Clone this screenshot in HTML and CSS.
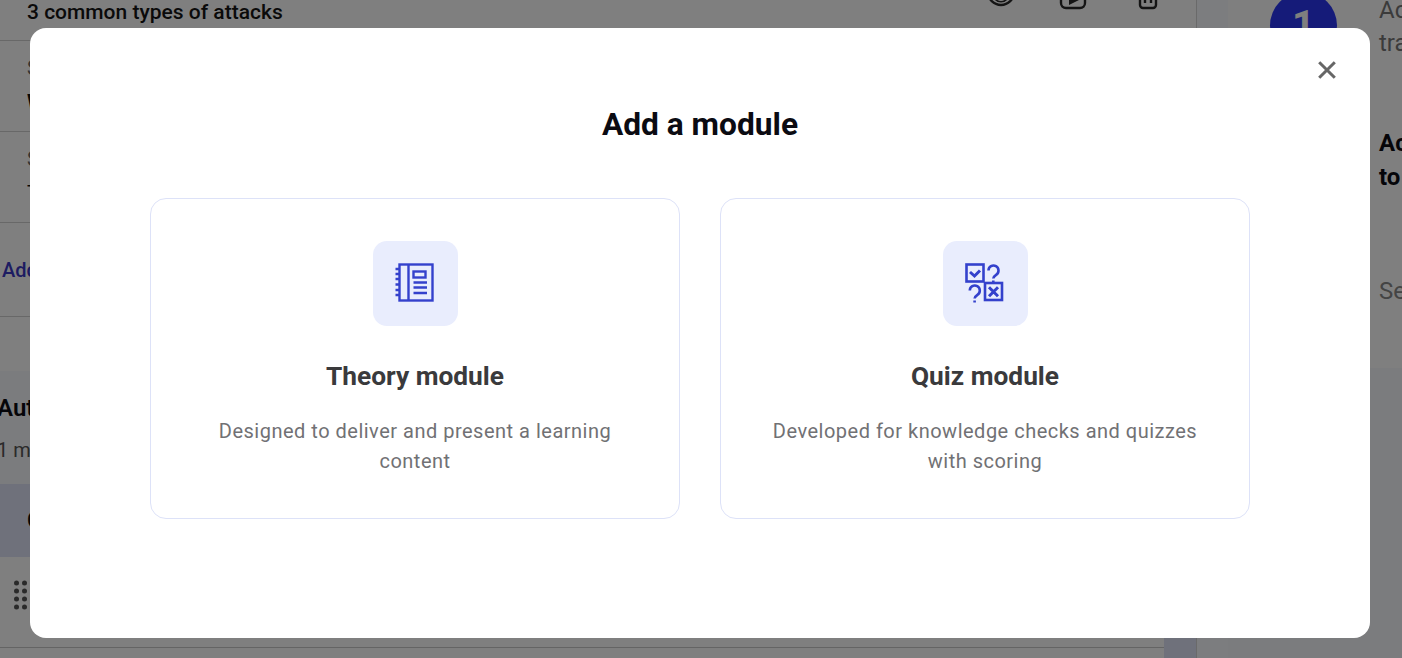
FILE: index.html
```html
<!DOCTYPE html>
<html lang="en">
<head>
<meta charset="utf-8">
<title>Add a module</title>
<link rel="stylesheet" href="styles.css">
</head>
<body>
<div class="page">
  <main class="main">
    <div class="content">
      <div class="row row-head">
        <span class="head-title">3 common types of attacks</span>
        <span class="head-icons">
          <svg class="ico" viewBox="0 0 28 28"><circle cx="14" cy="-8" r="13"/><path class="thin" d="M8 -1 a8 8 0 0 0 12 0"/></svg>
          <svg class="ico" viewBox="0 0 28 28"><rect x="2" y="-16" width="24" height="24" rx="5"/><path class="solid" d="M10 -2 L20 0 L10 5z"/></svg>
          <svg class="ico" viewBox="0 0 28 28"><path d="M6 -6 V5 a3 3 0 0 0 3 3 H19 a3 3 0 0 0 3 -3 V-6 M11 -2 V3 M17 -2 V3"/></svg>
        </span>
      </div>
      <div class="row row-step"><span class="step-label">S</span><b class="step-name">W</b></div>
      <div class="row row-step"><span class="step-label">S</span><span class="step-name">T</span></div>
      <div class="row row-add"><span class="add-link">Add</span></div>
      <div class="spacer"></div>
      <section class="auto">
        <div class="auto-title">Aut</div>
        <div class="auto-sub">1 m</div>
      </section>
      <div class="band"><span class="band-text">C</span></div>
      <div class="row-drag">
        <svg class="dots" viewBox="0 0 14 31"><g>
          <circle cx="2.5" cy="3" r="2.5"/><circle cx="10.5" cy="3" r="2.5"/>
          <circle cx="2.5" cy="11" r="2.5"/><circle cx="10.5" cy="11" r="2.5"/>
          <circle cx="2.5" cy="19" r="2.5"/><circle cx="10.5" cy="19" r="2.5"/>
          <circle cx="2.5" cy="27" r="2.5"/><circle cx="10.5" cy="27" r="2.5"/>
        </g></svg>
      </div>
    </div>
    <div class="gutter">
      <div class="gutter-top"></div>
      <div class="gutter-band"></div>
    </div>
  </main>
  <div class="strip"></div>
  <aside class="side">
    <div class="side-top">
      <div class="side-step">
        <div class="badge"><span class="badge-num">1</span></div>
        <div class="side-copy">Ac<br>tra</div>
      </div>
      <div class="side-bold">Ac<br>to</div>
      <div class="side-muted">Se</div>
    </div>
    <div class="side-rest"></div>
  </aside>
</div>

<div class="backdrop"></div>

<div class="modal" role="dialog" aria-label="Add a module">
  <button class="close" aria-label="Close">
    <svg viewBox="0 0 20 20"><path d="M2.2 2.2 L17.8 17.8 M17.8 2.2 L2.2 17.8"/></svg>
  </button>
  <h1 class="modal-title">Add a module</h1>
  <div class="cards">
    <article class="card">
      <div class="tile">
        <svg class="tile-icon notebook" viewBox="0 0 44 44">
          <rect x="5.5" y="2.5" width="33" height="36"/>
          <path d="M14.5 2.5 V38.5 M1.5 7 H5.5 M1.5 12 H5.5 M1.5 17 H5.5 M1.5 22.5 H5.5 M1.5 28 H5.5 M1.5 33 H5.5"/>
          <rect x="19.5" y="9.5" width="12" height="6"/>
          <path d="M19.5 20.5 H33 M19.5 25.5 H33 M19.5 31 H33"/>
        </svg>
      </div>
      <h2 class="card-title">Theory module</h2>
      <p class="card-desc">Designed to deliver and present a learning content</p>
    </article>
    <article class="card">
      <div class="tile">
        <svg class="tile-icon quiz" viewBox="0 0 44 44">
          <rect x="2.5" y="2.5" width="17" height="17"/>
          <path class="thick" d="M6 10 L10.5 14 L16 8.5"/>
          <path d="M24.5 8.5 a5 5 0 1 1 7.6 4.3 c-2 1.3 -2.8 2 -2.8 3.8 M29.3 18.4 V20.6"/>
          <rect x="21" y="21" width="17" height="17"/>
          <path class="thick" d="M25 25.2 L34 34.2 M34 25.2 L25 34.2"/>
          <path d="M5.8 28.5 a5 5 0 1 1 7.6 4.3 c-2 1.3 -2.8 2 -2.8 3.8 M10.6 38.4 V40.6"/>
        </svg>
      </div>
      <h2 class="card-title">Quiz module</h2>
      <p class="card-desc">Developed for knowledge checks and quizzes with scoring</p>
    </article>
  </div>
</div>
</body>
</html>
```
FILE: styles.css
```css
* { box-sizing: border-box; }

html, body {
  margin: 0;
  height: 658px;
  overflow: hidden;
  font-family: Roboto, "Liberation Sans", sans-serif;
  background: #fff;
}

.page {
  display: flex;
  height: 658px;
  overflow: hidden;
}

.main {
  display: flex;
  width: 1197px;
  flex: none;
  border-right: 1px solid #d4d4d4;
}

.content {
  width: 1164px;
  flex: none;
  display: flex;
  flex-direction: column;
  overflow: hidden;
}

.gutter {
  flex: 1;
  display: flex;
  flex-direction: column;
}

.gutter-top {
  height: 484px;
  background: #fff;
}

.gutter-band {
  flex: 1;
  background: #dfe3f7;
}

.row {
  border-bottom: 1px solid #d0d0d0;
  padding-left: 27px;
  color: #111;
}

.row-head {
  height: 41px;
  display: flex;
  justify-content: space-between;
  align-items: flex-start;
  overflow: hidden;
}

.head-title {
  font-size: 21px;
  font-weight: 500;
  line-height: 24px;
  color: #141414;
}

.head-icons {
  display: flex;
  gap: 44px;
  margin-right: 5px;
}

.ico {
  width: 28px;
  height: 28px;
  fill: none;
  stroke: #2b2b2b;
  stroke-width: 2.4;
  overflow: visible;
}

.ico .solid {
  fill: #2b2b2b;
  stroke: none;
}

.ico .thin {
  stroke-width: 1.6;
}

.ico:last-child {
  margin-left: 3px;
  margin-right: -3px;
}

.row-step {
  height: 91px;
  padding-top: 15px;
  display: flex;
  flex-direction: column;
  gap: 10px;
  font-size: 20px;
  line-height: 24px;
}

.step-label { color: #666; }
.step-name { color: #111; }

.row-add {
  height: 94px;
  padding: 35px 0 0 2px;
  font-size: 20px;
  line-height: 24px;
}

.add-link {
  color: #3b38c4;
  font-weight: 500;
}

.spacer { height: 54px; }

.auto {
  height: 113px;
  background: #f7f8fc;
  padding: 25px 0 0;
}

.auto-title {
  margin-left: -3px;
  font-size: 24px;
  font-weight: 600;
  line-height: 24px;
  color: #0b0b12;
}

.auto-sub {
  margin: 18px 0 0 -3px;
  font-size: 20px;
  line-height: 24px;
  color: #555;
}

.band {
  height: 73px;
  background: #dfe3f7;
  padding: 22px 0 0 27px;
}

.band-text {
  font-size: 24px;
  font-weight: 600;
  line-height: 28px;
  color: #0b0b12;
}

.row-drag {
  height: 91px;
  padding: 23px 0 0 14px;
  border-bottom: 1px solid #c8c8c8;
}

.dots {
  width: 14px;
  height: 31px;
  fill: #555;
  display: block;
}

.strip {
  width: 31px;
  flex: none;
  background: #f8fafe;
}

.side {
  flex: 1;
  display: flex;
  flex-direction: column;
  background: #fff;
  overflow: hidden;
}

.side-top {
  height: 368px;
  padding-left: 42px;
}

.side-rest {
  flex: 1;
  background: #f6f8fc;
}

.side-step {
  display: flex;
  gap: 42px;
  height: 122px;
  margin-top: -8px;
}

.badge {
  width: 67px;
  height: 67px;
  flex: none;
  border-radius: 50%;
  background: #2a37f2;
  display: flex;
  justify-content: center;
  align-items: center;
}

.badge-num {
  font-size: 40px;
  font-weight: 700;
  line-height: 40px;
  color: #fff;
}

.side-copy {
  padding-top: 2px;
  font-size: 24px;
  line-height: 33px;
  color: #777;
}

.side-bold {
  margin-left: 109px;
  margin-top: 12px;
  font-size: 24px;
  font-weight: 700;
  line-height: 34px;
  color: #0b0b12;
}

.side-muted {
  margin-left: 109px;
  margin-top: 82px;
  font-size: 24px;
  line-height: 30px;
  color: #888;
}

.backdrop {
  position: fixed;
  inset: 0;
  background: rgba(0, 0, 0, 0.5);
}

.modal {
  position: fixed;
  left: 30px;
  top: 28px;
  width: 1340px;
  height: 610px;
  background: #fff;
  border-radius: 16px;
  padding: 77px 120px 0;
}

.close {
  position: absolute;
  right: 33px;
  top: 32px;
  width: 20px;
  height: 20px;
  padding: 0;
  border: 0;
  background: none;
}

.close svg {
  display: block;
  width: 20px;
  height: 20px;
  fill: none;
  stroke: #666;
  stroke-width: 3;
}

.modal-title {
  margin: 0 0 53px;
  text-align: center;
  font-size: 31.7px;
  font-weight: 700;
  line-height: 40px;
  color: #0b0b12;
}

.cards {
  display: flex;
  gap: 40px;
}

.card {
  flex: 1;
  height: 321px;
  padding: 42px 40px 0;
  border: 1px solid #dde2f8;
  border-radius: 16px;
  display: flex;
  flex-direction: column;
  align-items: center;
}

.tile {
  width: 85px;
  height: 85px;
  margin-left: 1px;
  border-radius: 14px;
  background: #e9edfd;
  display: flex;
  justify-content: center;
  align-items: center;
}

.tile-icon {
  width: 44px;
  height: 44px;
  fill: none;
  stroke: #3441cc;
  stroke-width: 2.4;
}

.quiz {
  stroke-width: 2.6;
}

.tile-icon .thick {
  stroke-width: 3;
}

.card-title {
  margin: 32px 0 0;
  font-size: 26.3px;
  font-weight: 700;
  line-height: 36px;
  color: #3a3a3c;
}

.card-desc {
  margin: 22px 0 0;
  text-align: center;
  font-size: 20px;
  letter-spacing: 0.5px;
  line-height: 30px;
  color: #717174;
}
```
